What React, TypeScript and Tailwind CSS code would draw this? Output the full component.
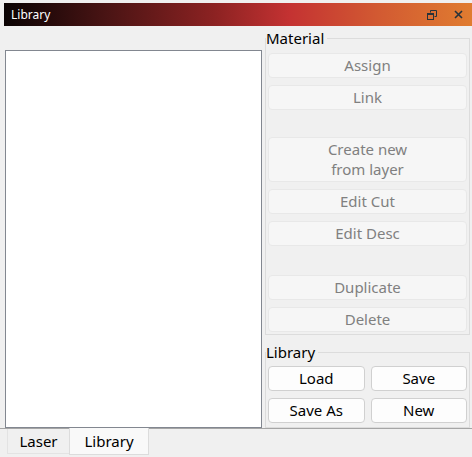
import React from "react";

const font = { fontFamily: '"Noto Sans", "Open Sans", sans-serif' };

function ToolButton({ label, enabled, tall }: { label: React.ReactNode; enabled?: boolean; tall?: boolean }) {
	return (
		<button
			className={
				(tall ? "h-[45px] leading-[20px] " : "h-[25px] leading-[20px] ") +
				(enabled
					? "bg-[#fdfdfd] border border-[#d0d0d0] text-black"
					: "bg-[#f6f6f6] border border-[#e8e8e8] text-[#808080]") +
				" w-full rounded-[4px] text-[15px] pb-[2px] flex flex-col items-center justify-center"
			}
		>
			{label}
		</button>
	);
}

function RestoreIcon() {
	return (
		<svg width="10" height="10" viewBox="0 0 10 10" fill="none" stroke="#26323a">
			<path d="M3.5 2.5V0.5H9.5V6.5H7.5" strokeWidth="1" />
			<rect x="0.5" y="3.5" width="6" height="6" strokeWidth="1" />
			<path d="M0.5 4.5H6.5" strokeWidth="1" />
		</svg>
	);
}

function CloseIcon() {
	return (
		<svg width="9" height="9" viewBox="0 0 9 9" fill="none" stroke="#26323a">
			<path d="M1 1L8 8M8 1L1 8" strokeWidth="1.6" />
		</svg>
	);
}

export default function App() {
	return (
		<div className="w-[472px] h-[457px] bg-[#f0f0f0] overflow-hidden flex flex-col" style={font}>
			<div className="h-[3px]" />
			{/* title bar */}
			<div className="ml-[4px] h-[23px] flex items-center bg-[linear-gradient(90deg,#0a0303_0%,#4a1414_22%,#8c2222_45%,#c43232_61%,#d25a32_80%,#e07c30_100%)]">
				<span className="pl-[7px] text-[12px] text-white leading-none">Library</span>
				<div className="ml-auto flex items-center gap-[17px] pr-[9px]">
					<RestoreIcon />
					<CloseIcon />
				</div>
			</div>

			{/* main */}
			<div className="flex h-[402px]">
				<div className="pl-[5px] pt-[24px]">
					<div className="w-[257px] h-[378px] bg-white border border-[#828790]" />
				</div>
				<div className="ml-[3px] w-[205px] pt-[4px] flex flex-col">
					<fieldset className="border border-[#dcdcdc] px-[2px] pb-[2px]">
						<legend className="text-[15px] leading-[16px] text-black pr-[3px] ml-[-2px]">Material</legend>
						<div className="flex flex-col gap-[7px] mt-[7px]">
							<ToolButton label="Assign" />
							<ToolButton label="Link" />
							<div className="h-[13px]" />
							<ToolButton
								tall
								label={
									<>
										<span>Create new</span>
										<span>from layer</span>
									</>
								}
							/>
							<ToolButton label="Edit Cut" />
							<ToolButton label="Edit Desc" />
							<div className="h-[15px]" />
							<ToolButton label="Duplicate" />
							<ToolButton label="Delete" />
						</div>
					</fieldset>
					<fieldset className="mt-[9px] border border-[#dcdcdc] px-[2px] pb-[3px]">
						<legend className="text-[15px] leading-[16px] text-black pr-[3px] ml-[-2px]">Library</legend>
						<div className="grid grid-cols-2 gap-[6px] mt-[6px]">
							<div className="h-[26px] flex"><ToolButton enabled label="Load" /></div>
							<div className="h-[26px] flex"><ToolButton enabled label="Save" /></div>
							<div className="h-[26px] flex"><ToolButton enabled label="Save As" /></div>
							<div className="h-[26px] flex"><ToolButton enabled label="New" /></div>
						</div>
					</fieldset>
				</div>
			</div>

			{/* tabs */}
			<div className="border-t border-[#a5a5a5] flex pl-[7px] text-[15px] text-black">
				<div className="w-[62px] h-[25px] flex items-center justify-center border-l border-b border-[#e3e3e3] bg-[#f0f0f0]">
					Laser
				</div>
				<div className="w-[80px] h-[27px] mt-[-1px] flex items-center justify-center border border-t-0 border-[#dcdcdc] bg-[#f9f9f9]">
					Library
				</div>
			</div>
		</div>
	);
}
